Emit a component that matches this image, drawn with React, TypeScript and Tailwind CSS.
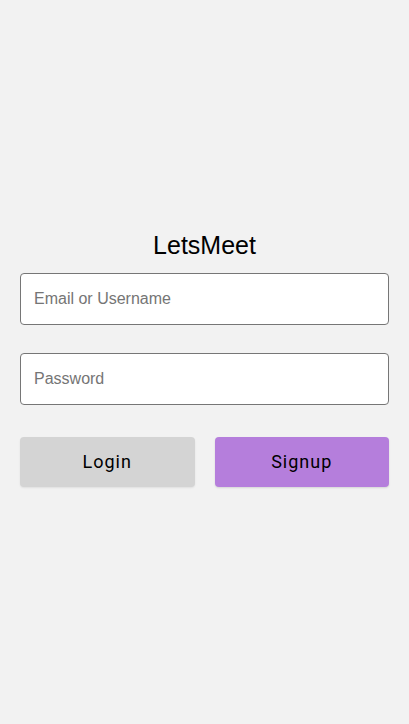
export default function App() {
  return (
    <main className="min-h-screen bg-[#f2f2f2] flex items-center justify-center px-5 pb-2 font-['Liberation_Sans',Arial,sans-serif]">
      <div className="w-full flex flex-col">
        <h1 className="text-[25px] leading-[30px] text-black text-center mb-[13px]">LetsMeet</h1>
        <input
          type="text"
          placeholder="Email or Username"
          className="h-[52px] w-full rounded-[4px] border border-[#767676] bg-white px-[13px] text-base outline-none placeholder:text-[#757575]"
        />
        <input
          type="password"
          placeholder="Password"
          className="mt-[28px] h-[52px] w-full rounded-[4px] border border-[#767676] bg-white px-[13px] text-base outline-none placeholder:text-[#757575]"
        />
        <div className="mt-[32px] grid grid-cols-2 gap-5">
          <button className="h-[50px] rounded-[4px] bg-[#d4d4d4] text-[18px] tracking-[1px] text-black font-['Roboto',sans-serif] shadow-[0_1px_2px_rgba(0,0,0,0.08)]">
            Login
          </button>
          <button className="h-[50px] rounded-[4px] bg-[#b57edc] text-[18px] tracking-[1px] text-black font-['Roboto',sans-serif] shadow-[0_1px_2px_rgba(0,0,0,0.12)]">
            Signup
          </button>
        </div>
      </div>
    </main>
  );
}
